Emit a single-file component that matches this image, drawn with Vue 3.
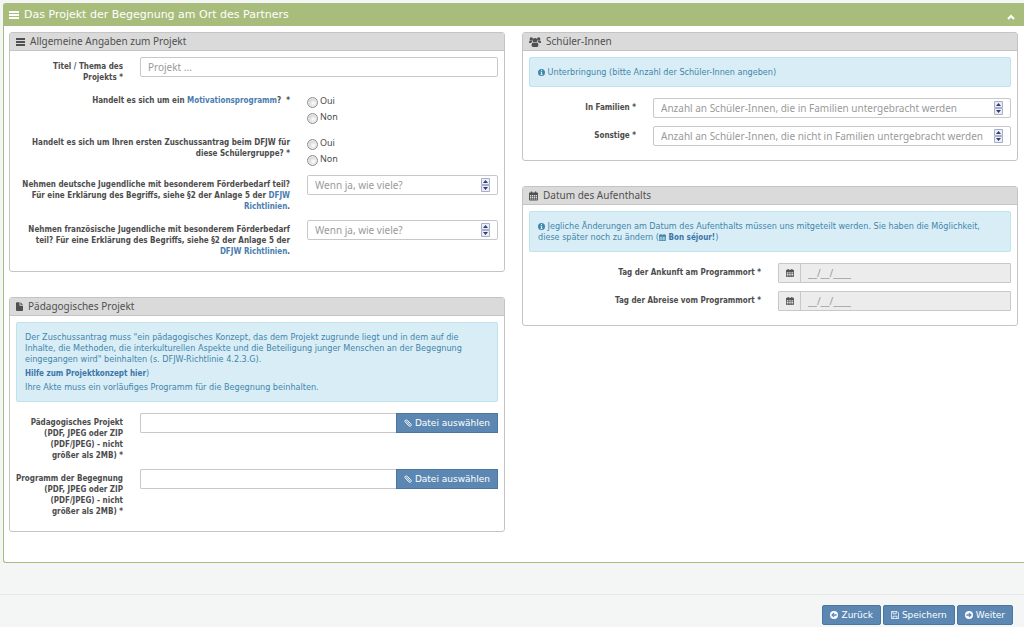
<script setup>
import { ref, reactive } from 'vue'

const open = ref(true)
const form = reactive({
  title: '', motivation: null, first: null, german: '', french: '',
  families: '', others: '', arrival: '', departure: '', file1: '', file2: ''
})
const yesNo = [
  { value: 'oui', text: 'Oui' },
  { value: 'non', text: 'Non' }
]
const lodging = [
  { key: 'families', label: 'In Familien *', hint: 'Anzahl an Schüler-Innen, die in Familien untergebracht werden' },
  { key: 'others', label: 'Sonstige *', hint: 'Anzahl an Schüler-Innen, die nicht in Familien untergebracht werden' }
]
const dates = [
  { key: 'arrival', label: 'Tag der Ankunft am Programmort *' },
  { key: 'departure', label: 'Tag der Abreise vom Programmort *' }
]
const files = [
  { key: 'file1', label: 'Pädagogisches Projekt' },
  { key: 'file2', label: 'Programm der Begegnung' }
]
</script>

<template>
  <svg class="defs" aria-hidden="true">
    <symbol id="i-bars" viewBox="0 0 10 10" preserveAspectRatio="none"><path d="M0 1h10v2H0zM0 4h10v2H0zM0 7h10v2H0z" /></symbol>
    <symbol id="i-file" viewBox="0 0 8 10"><path d="M0 1q0-1 1-1h3v4h4v5q0 1-1 1H1q-1 0-1-1zM5 0l3 3H5z" /></symbol>
    <symbol id="i-users" viewBox="0 0 12 10">
      <circle cx="6" cy="3.2" r="2.3" /><circle cx="2.3" cy="2" r="1.7" /><circle cx="9.7" cy="2" r="1.7" />
      <path d="M2.6 8.6q0-3 1.8-3.1q1.600 1.200 3.200 0q1.800.1 1.800 3.100q0 1.400-1.400 1.400H4q-1.400 0-1.400-1.400zM0 5.500q0-1.900 1-2q1 .6 2 .4q.1.700.6 1.200q-1.200.1-1.700 1H1q-1 0-1-.6zM12 5.500q0-1.900-1-2q-1 .6-2 .4q-.1.700-.6 1.200q1.200.1 1.700 1H11q1 0 1-.6z" />
    </symbol>
    <symbol id="i-cal" viewBox="0 0 10 10">
      <path fill-rule="evenodd" d="M0 2q0-1 1-1h1V0h1.500v1h3V0H8v1h1q1 0 1 1v7q0 1-1 1H1q-1 0-1-1zM1 4v1.500h1.500V4zM3.200 4v1.500h1.500V4zM5.400 4v1.500h1.500V4zM7.600 4v1.500H9V4zM1 6.200v1.200h1.500V6.200zM3.200 6.200v1.200h1.500V6.200zM5.400 6.200v1.200h1.500V6.200zM7.600 6.200v1.200H9V6.200zM1 8v1h1.500V8zM3.200 8v1h1.500V8zM5.400 8v1h1.500V8zM7.600 8v1H9V8z" />
    </symbol>
    <symbol id="i-info" viewBox="0 0 10 10">
      <path fill-rule="evenodd" d="M5 0a5 5 0 1 1 0 10a5 5 0 1 1 0-10zM4.200 1.400v1.500h1.700V1.400zM3.500 4v1h.8v2.400h-.8v1.100h3.100V7.400h-.7V4z" />
    </symbol>
    <symbol id="i-clip" viewBox="0 0 10 10">
      <path fill="none" stroke="currentColor" stroke-width="1.100" stroke-linecap="round" d="M6.900 4.600L4 1.600Q2.800.5 1.600 1.600Q.5 2.800 1.600 4l4.500 4.600q1.300 1.100 2.500 0q1.100-1.200 0-2.500L5 2.700M2.900 3.100l4 4.200" />
    </symbol>
    <symbol id="i-left" viewBox="0 0 10 10">
      <path fill-rule="evenodd" d="M5 0a5 5 0 1 1 0 10a5 5 0 1 1 0-10zM1.500 5l3.200 3.200l1-1L4.300 5.800h4V4.200h-4l1.400-1.400l-1-1z" />
    </symbol>
    <symbol id="i-right" viewBox="0 0 10 10">
      <path fill-rule="evenodd" d="M5 0a5 5 0 1 1 0 10a5 5 0 1 1 0-10zM8.500 5L5.300 1.800l-1 1l1.400 1.400h-4v1.600h4L4.300 7.200l1 1z" />
    </symbol>
    <symbol id="i-save" viewBox="0 0 10 10">
      <path fill="none" stroke="currentColor" d="M.5.5h7l2 2v7h-9zM2.500.5v3h4v-3M2.500 9.500v-3h5v3" />
    </symbol>
    <symbol id="i-up" viewBox="0 0 10 8"><path fill="none" stroke="currentColor" stroke-width="2" d="M2 6l3-3l3 3" /></symbol>
    <symbol id="i-spin" viewBox="0 0 9 14">
      <path fill="#eceef6" stroke="#a9aec8" d="M.5.5h8v6h-8zM.5 7.500h8v6h-8z" />
      <path fill="#343c78" d="M4.500 2L7 5H2zM4.500 12L2 9h5z" />
    </symbol>
  </svg>

  <main class="page">
    <section class="outer">
      <header class="outer-head">
        <svg class="ico"><use href="#i-bars" /></svg>
        <h1>Das Projekt der Begegnung am Ort des Partners</h1>
        <button class="toggle" type="button" aria-label="Einklappen" :aria-expanded="open" @click="open = !open">
          <svg class="ico up"><use href="#i-up" /></svg>
        </button>
      </header>

      <div v-show="open" class="cols">
        <div class="col">
          <section class="panel">
            <h2><svg class="ico head"><use href="#i-bars" /></svg>Allgemeine Angaben zum Projekt</h2>
            <div class="body">
              <div class="row narrow">
                <label class="lbl" for="title">Titel / Thema des<br>Projekts *</label>
                <input id="title" v-model="form.title" class="box" type="text" placeholder="Projekt ...">
              </div>
              <div class="row wide" role="radiogroup" aria-labelledby="l-mot">
                <span id="l-mot" class="lbl">Handelt es sich um ein <a href="#">Motivationsprogramm</a>? &nbsp;*</span>
                <div class="radios">
                  <label v-for="o in yesNo" :key="o.value"><input v-model="form.motivation" type="radio" name="motivation" :value="o.value">{{ o.text }}</label>
                </div>
              </div>
              <div class="row wide" role="radiogroup" aria-labelledby="l-first">
                <span id="l-first" class="lbl">Handelt es sich um Ihren ersten Zuschussantrag beim DFJW für<br>diese Schülergruppe? *</span>
                <div class="radios">
                  <label v-for="o in yesNo" :key="o.value"><input v-model="form.first" type="radio" name="first" :value="o.value">{{ o.text }}</label>
                </div>
              </div>
              <div class="row wide">
                <label class="lbl" for="german">Nehmen deutsche Jugendliche mit besonderem Förderbedarf teil?<br>Für eine Erklärung des Begriffs, siehe §2 der Anlage 5 der <a href="#">DFJW<br>Richtlinien</a>.</label>
                <div class="box num">
                  <input id="german" v-model="form.german" type="number" placeholder="Wenn ja, wie viele?">
                  <svg class="spin"><use href="#i-spin" /></svg>
                </div>
              </div>
              <div class="row wide">
                <label class="lbl" for="french">Nehmen französische Jugendliche mit besonderem Förderbedarf<br>teil? Für eine Erklärung des Begriffs, siehe §2 der Anlage 5 der<br><a href="#">DFJW Richtlinien</a>.</label>
                <div class="box num">
                  <input id="french" v-model="form.french" type="number" placeholder="Wenn ja, wie viele?">
                  <svg class="spin"><use href="#i-spin" /></svg>
                </div>
              </div>
            </div>
          </section>

          <section class="panel">
            <h2><svg class="ico file"><use href="#i-file" /></svg>Pädagogisches Projekt</h2>
            <div class="body">
              <div class="alert">
                <p>Der Zuschussantrag muss "ein pädagogisches Konzept, das dem Projekt zugrunde liegt und in dem auf die<br>Inhalte, die Methoden, die interkulturellen Aspekte und die Beteiligung junger Menschen an der Begegnung<br>eingegangen wird" beinhalten (s. DFJW-Richtlinie 4.2.3.G).</p>
                <p><a href="#">Hilfe zum Projektkonzept hier</a>)</p>
                <p>Ihre Akte muss ein vorläufiges Programm für die Begegnung beinhalten.</p>
              </div>
              <div v-for="f in files" :key="f.key" class="row narrow">
                <label class="lbl" :for="f.key">{{ f.label }}<br>(PDF, JPEG oder ZIP<br>(PDF/JPEG) - nicht<br>größer als 2MB) *</label>
                <div class="upload">
                  <input :id="f.key" v-model="form[f.key]" class="box" type="text" readonly>
                  <button class="btn square" type="button"><svg class="ico small"><use href="#i-clip" /></svg>Datei auswählen</button>
                </div>
              </div>
            </div>
          </section>
        </div>

        <div class="col">
          <section class="panel">
            <h2><svg class="ico users"><use href="#i-users" /></svg>Schüler-Innen</h2>
            <div class="body">
              <div class="alert">
                <p><svg class="ico tiny"><use href="#i-info" /></svg> Unterbringung (bitte Anzahl der Schüler-Innen angeben)</p>
              </div>
              <div v-for="l in lodging" :key="l.key" class="row narrow">
                <label class="lbl" :for="l.key">{{ l.label }}</label>
                <div class="box num">
                  <input :id="l.key" v-model="form[l.key]" type="number" :placeholder="l.hint">
                  <svg class="spin"><use href="#i-spin" /></svg>
                </div>
              </div>
            </div>
          </section>

          <section class="panel">
            <h2><svg class="ico head"><use href="#i-cal" /></svg>Datum des Aufenthalts</h2>
            <div class="body">
              <div class="alert">
                <p><svg class="ico tiny"><use href="#i-info" /></svg> Jegliche Änderungen am Datum des Aufenthalts müssen uns mitgeteilt werden. Sie haben die Möglichkeit,<br>diese später noch zu ändern (<svg class="ico tiny"><use href="#i-cal" /></svg> <b>Bon séjour!</b>)</p>
              </div>
              <div v-for="d in dates" :key="d.key" class="row half">
                <label class="lbl" :for="d.key">{{ d.label }}</label>
                <div class="box date">
                  <span class="addon"><svg class="ico small"><use href="#i-cal" /></svg></span>
                  <input :id="d.key" v-model="form[d.key]" type="text" placeholder="__/__/____" readonly>
                </div>
              </div>
            </div>
          </section>
        </div>
      </div>
    </section>

    <footer class="foot">
      <button class="btn" type="button"><svg class="ico small"><use href="#i-left" /></svg>Zurück</button>
      <button class="btn" type="button"><svg class="ico small"><use href="#i-save" /></svg>Speichern</button>
      <button class="btn" type="button"><svg class="ico small"><use href="#i-right" /></svg>Weiter</button>
    </footer>
  </main>
</template>

<style>
body { background: #f4f5f5; }
</style>

<style scoped>
.defs { position: absolute; width: 0; height: 0; }
.page {
  padding-top: 3px;
  font-family: "Noto Sans", "DejaVu Sans", sans-serif;
  font-size: 9px;
  line-height: 11px;
  color: #4c4c4c;
}
.page *, .page { box-sizing: border-box; }
h1, h2, p { margin: 0; font-weight: normal; }
input, button { font-family: inherit; margin: 0; }
a { color: #4a7db0; text-decoration: none; }
.ico { width: 10px; height: 10px; fill: currentColor; flex: none; }
.ico.small { width: 8px; height: 8px; }
.ico.tiny { width: 7px; height: 7px; vertical-align: middle; }
.ico.users { width: 12px; }
.ico.head { width: 9px; }
.ico.file { width: 7px; height: 9px; }
.ico.up { height: 8px; display: block; }

.outer {
  margin-left: 3px;
  background: #fff;
  border: 1px solid #a8bd7b;
  border-right: 0;
  border-radius: 3px 0 0 3px;
}
.outer-head {
  display: flex;
  align-items: center;
  gap: 5px;
  height: 22px;
  padding: 0 8px 0 5px;
  background: #a8bd7b;
  color: #fff;
}
h1 { flex: 1; font: 11px/20px "DejaVu Sans", sans-serif; }
.toggle { padding: 4px 0 0; border: 0; background: none; color: #fff; }

.cols {
  display: grid;
  grid-template-columns: 1fr 1fr;
  gap: 17px;
  align-items: start;
  padding: 6px 6px 30px 5px;
}
.col { display: grid; gap: 25px; }
.panel {
  border: 1px solid #c4c4c4;
  border-radius: 3px;
  background: #fff;
}
h2 {
  display: flex;
  align-items: center;
  gap: 5px;
  height: 18px;
  padding: 0 6px;
  border-bottom: 1px solid #c4c4c4;
  background: #dadada;
  color: #505050;
  font-size: 10px;
  line-height: 17px;
}
.body { padding: 6px; }
.row { display: grid; column-gap: 17px; align-items: start; margin-bottom: 8px; }
.narrow { grid-template-columns: 107fr 358fr; }
.wide { grid-template-columns: 274fr 191fr; }
.half { grid-template-columns: 232fr 233fr; }
.lbl {
  padding-top: 4px;
  font: bold 8px/11px "DejaVu Sans Condensed", "DejaVu Sans", sans-serif;
  text-align: right;
  white-space: nowrap;
  justify-self: end;
}

.box {
  width: 100%;
  min-width: 0;
  height: 20px;
  padding: 0 7px;
  border: 1px solid #c8c8c8;
  border-radius: 2px;
  background: #fff;
  color: #555;
  font-size: 10px;
}
.box input {
  flex: 1;
  min-width: 0;
  height: 18px;
  padding: 0;
  border: 0;
  background: none;
  font-size: 10px;
  color: #555;
  appearance: textfield;
}
.box input::-webkit-inner-spin-button { appearance: none; margin: 0; }
input::placeholder { color: #9a9a9a; opacity: 1; }
.num { display: flex; align-items: center; }
.spin { width: 9px; height: 14px; flex: none; }

.radios { display: grid; padding-top: 2px; }
.radios label { display: flex; gap: 2px; height: 16px; line-height: 16px; }
.radios input {
  appearance: none;
  width: 11px;
  height: 11px;
  margin-top: 4px;
  border: 1px solid #8f8f8f;
  border-radius: 50%;
  background: radial-gradient(circle at 60% 60%, #fff, #b8b8b8);
  box-shadow: inset 0 0 0 1px #eee;
}
.radios input:checked { background: radial-gradient(circle, #444 30%, #fff 40%); }

.alert {
  display: grid;
  gap: 3px;
  margin-bottom: 11px;
  padding: 9px 8px 8px;
  border: 1px solid #bfe4ec;
  border-radius: 2px;
  background: #d9edf6;
  color: #3f86aa;
  font-family: "DejaVu Sans Condensed", "DejaVu Sans", sans-serif;
  white-space: nowrap;
}
.alert a, .alert b { color: #3b76a8; font-weight: bold; font-size: 8px; line-height: 8px; }

.upload { display: flex; }
.upload .box { flex: 1; border-right: 0; border-radius: 2px 0 0 2px; }
.btn {
  display: flex;
  align-items: center;
  gap: 3px;
  height: 20px;
  padding: 0 7px;
  border: 1px solid #4b769f;
  border-radius: 2px;
  background: #5b87b2;
  color: #fff;
  font: 9px/11px "DejaVu Sans", sans-serif;
}
.btn.square { border-radius: 0; }

.date { display: flex; padding: 0; background: #ececec; border-radius: 1px; }
.addon {
  display: grid;
  place-items: center;
  width: 22px;
  margin-right: 7px;
  border-right: 1px solid #c8c8c8;
}

.foot {
  display: flex;
  justify-content: flex-end;
  gap: 2px;
  margin-top: 31px;
  padding: 10px 11px 1px;
  border-top: 1px solid #e6e8e8;
}
</style>
